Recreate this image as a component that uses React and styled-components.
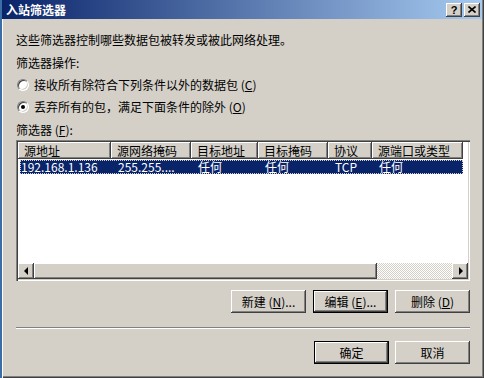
import React from 'react';
import styled, { createGlobalStyle, css } from 'styled-components';

const face = '#D4D0C8';
const shadow = '#808080';
const dark = '#404040';
const navy = '#0A246A';

const GlobalStyle = createGlobalStyle`
  html, body {
    margin: 0;
    padding: 0;
    background: ${face};
  }
  body {
    font-family: "Noto Sans CJK SC", "Noto Sans", sans-serif;
    font-size: 12px;
    color: #000;
  }
`;

const raised = css`
  background: ${face};
  box-shadow: inset -1px -1px ${dark}, inset 1px 1px #fff,
    inset -2px -2px ${shadow}, inset 2px 2px ${face};
`;

const Window = styled.div`
  width: 484px;
  height: 378px;
  box-sizing: border-box;
  border-left: 2px solid #3a6ea5;
  background: ${face};
  box-shadow: inset 1px 0 #fff, inset -1px -1px ${dark}, inset -2px -2px ${shadow};
  display: flex;
  flex-direction: column;
`;

const TitleBar = styled.div`
  height: 19px;
  margin-right: 2px;
  padding: 0 2px 0 4px;
  display: flex;
  align-items: center;
  justify-content: space-between;
  background: linear-gradient(to right, ${navy}, #a6caf0);
`;

const Title = styled.span`
  color: #fff;
  font-weight: bold;
  font-size: 12px;
  line-height: 14px;
`;

const TitleButtons = styled.div`
  display: flex;
  gap: 2px;
`;

const TitleButton = styled.div`
  ${raised};
  width: 16px;
  height: 14px;
  display: flex;
  align-items: center;
  justify-content: center;
  font-family: "Liberation Sans", Arial, sans-serif;
  font-weight: bold;
  font-size: 11px;
  line-height: 14px;
`;

const Body = styled.div`
  flex: 1;
  padding: 0 14px;
  display: flex;
  flex-direction: column;
`;

const Text = styled.div`
  line-height: 14px;
  height: 14px;
  margin-top: ${p => p.$top}px;
  white-space: nowrap;
`;

const RadioRow = styled.label`
  display: flex;
  align-items: center;
  height: 14px;
  line-height: 14px;
  margin-top: 8px;
  white-space: nowrap;
`;

const RadioDot = styled.span`
  width: 12px;
  height: 12px;
  box-sizing: border-box;
  border-radius: 50%;
  background: #fff;
  border: 1px solid;
  border-color: ${shadow} #fff #fff ${shadow};
  box-shadow: inset 1px 1px ${dark}, inset -1px -1px ${face};
  margin: 0 5px 0 1px;
  display: flex;
  align-items: center;
  justify-content: center;

  &::after {
    content: '';
    width: 4px;
    height: 4px;
    border-radius: 50%;
    background: ${p => (p.$checked ? '#000' : 'transparent')};
  }
`;

const ListBox = styled.div`
  margin-top: 3px;
  height: 141px;
  box-sizing: border-box;
  padding: 2px;
  background: #fff;
  box-shadow: inset 1px 1px ${shadow}, inset 2px 2px ${dark},
    inset -1px -1px #fff, inset -2px -2px ${face};
  display: flex;
  flex-direction: column;
`;

const HeaderRow = styled.div`
  display: flex;
  height: 17px;
`;

const HeaderCell = styled.div`
  ${raised};
  width: ${p => p.$w}px;
  flex: none;
  box-sizing: border-box;
  padding-left: 6px;
  line-height: 17px;
  white-space: nowrap;
`;

const Row = styled.div`
  display: flex;
  height: 14px;
  margin: 1px 0 0 2px;
  width: 443px;
  background: ${p => (p.$selected ? navy : 'transparent')};
  color: ${p => (p.$selected ? '#fff' : '#000')};
  outline: ${p => (p.$selected ? `1px dotted ${face}` : 'none')};
  outline-offset: -1px;
`;

const Cell = styled.div`
  width: ${p => p.$w}px;
  flex: none;
  box-sizing: border-box;
  padding-left: ${p => p.$pad}px;
  line-height: 14px;
  white-space: nowrap;
`;

const ListSpace = styled.div`
  flex: 1;
`;

const ScrollBar = styled.div`
  display: flex;
  height: 16px;
`;

const ScrollButton = styled.div`
  ${raised};
  width: 16px;
  flex: none;
  display: flex;
  align-items: center;
  justify-content: center;

  &::after {
    content: '';
    width: 0;
    height: 0;
    border-top: 4px solid transparent;
    border-bottom: 4px solid transparent;
    ${p =>
      p.$dir === 'left'
        ? css`border-right: 4px solid #000; margin-left: -1px;`
        : css`border-left: 4px solid #000; margin-left: 1px;`}
  }
`;

const Thumb = styled.div`
  ${raised};
  width: 343px;
  flex: none;
`;

const Track = styled.div`
  flex: 1;
  background: repeating-conic-gradient(#fff 0 25%, ${face} 0 50%) 0 0 / 2px 2px;
`;

const ButtonRow = styled.div`
  display: flex;
  justify-content: flex-end;
  gap: ${p => p.$gap}px;
  margin-top: ${p => p.$top}px;
`;

const Button = styled.div`
  width: 75px;
  height: 23px;
  display: flex;
  align-items: center;
  justify-content: center;
  white-space: nowrap;
  line-height: 14px;
  background: ${face};
  box-shadow: ${p =>
    p.$default
      ? `inset 0 0 0 1px #000, inset -2px -2px ${dark}, inset 2px 2px #fff, inset -3px -3px ${shadow}`
      : `inset -1px -1px ${dark}, inset 1px 1px #fff, inset -2px -2px ${shadow}, inset 2px 2px ${face}`};
`;

const Separator = styled.div`
  margin-top: 14px;
  border-top: 1px solid ${shadow};
  border-bottom: 1px solid #fff;
`;

const columns = [
  { title: '源地址', w: 93 },
  { title: '源网络掩码', w: 80 },
  { title: '目标地址', w: 67 },
  { title: '目标掩码', w: 70 },
  { title: '协议', w: 44 },
  { title: '源端口或类型', w: 91 },
];

const rows = [['192.168.1.136', '255.255....', '任何', '任何', 'TCP', '任何']];

const CloseIcon = () => (
  <svg width="8" height="7" viewBox="0 0 8 7">
    <path d="M0.5 0.5 L7.5 6.5 M7.5 0.5 L0.5 6.5" stroke="#000" strokeWidth="1.6" />
  </svg>
);

const App = () => (
  <>
    <GlobalStyle />
    <Window>
      <TitleBar>
        <Title>入站筛选器</Title>
        <TitleButtons>
          <TitleButton>?</TitleButton>
          <TitleButton>
            <CloseIcon />
          </TitleButton>
        </TitleButtons>
      </TitleBar>
      <Body>
        <Text $top={14}>这些筛选器控制哪些数据包被转发或被此网络处理。</Text>
        <Text $top={9}>筛选器操作:</Text>
        <RadioRow>
          <RadioDot />
          接收所有除符合下列条件以外的数据包 (<u>C</u>)
        </RadioRow>
        <RadioRow>
          <RadioDot $checked />
          丢弃所有的包，满足下面条件的除外 (<u>O</u>)
        </RadioRow>
        <Text $top={9}>
          筛选器 (<u>F</u>):
        </Text>
        <ListBox>
          <HeaderRow>
            {columns.map(c => (
              <HeaderCell key={c.title} $w={c.w}>
                {c.title}
              </HeaderCell>
            ))}
          </HeaderRow>
          {rows.map((r, i) => (
            <Row key={i} $selected>
              {r.map((v, j) => (
                <Cell key={j} $w={j === 0 ? columns[0].w - 2 : columns[j].w} $pad={j === 0 ? 1 : 7}>
                  {v}
                </Cell>
              ))}
            </Row>
          ))}
          <ListSpace />
          <ScrollBar>
            <ScrollButton $dir="left" />
            <Thumb />
            <Track />
            <ScrollButton $dir="right" />
          </ScrollBar>
        </ListBox>
        <ButtonRow $gap={7} $top={9}>
          <Button>新建 (<u>N</u>)...</Button>
          <Button $default>编辑 (<u>E</u>)...</Button>
          <Button>删除 (<u>D</u>)</Button>
        </ButtonRow>
        <Separator />
        <ButtonRow $gap={6} $top={12}>
          <Button $default>确定</Button>
          <Button>取消</Button>
        </ButtonRow>
      </Body>
    </Window>
  </>
);

export default App;
